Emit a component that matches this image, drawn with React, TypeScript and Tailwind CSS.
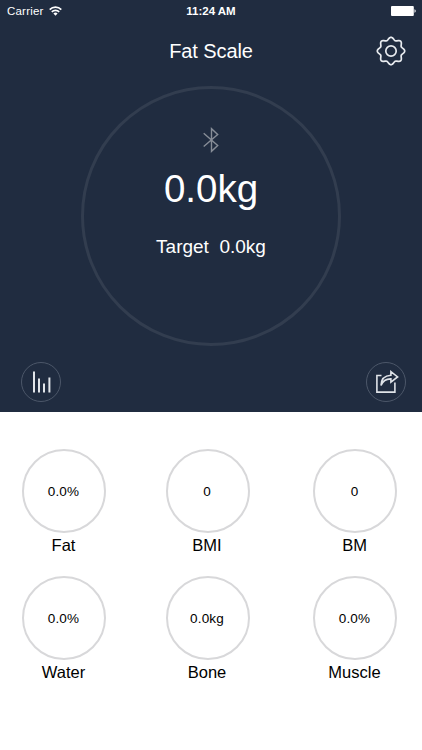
import React from 'react';

interface MetricProps {
  label: string;
  value: string;
}

const metrics: MetricProps[] = [
  { label: 'Fat', value: '0.0%' },
  { label: 'BMI', value: '0' },
  { label: 'BM', value: '0' },
  { label: 'Water', value: '0.0%' },
  { label: 'Bone', value: '0.0kg' },
  { label: 'Muscle', value: '0.0%' },
];

// Outline of the eight-lobed gear
const gearPoints = Array.from({ length: 128 }, (_, i) => {
  const angle = (i / 128) * Math.PI * 2;
  const radius = 12.4 + 1.3 * Math.cos(8 * angle);
  return `${(15 + radius * Math.sin(angle)).toFixed(2)},${(15 - radius * Math.cos(angle)).toFixed(2)}`;
}).join(' ');

const Metric: React.FC<MetricProps> = ({ label, value }) => (
  <div className="flex w-[84px] flex-col items-center">
    <div className="flex h-[84px] w-[84px] items-center justify-center rounded-full border-2 border-[#d8d8da] pt-0.5 pr-px text-[13.5px] tracking-[0.2px]">
      {value}
    </div>
    <span className="mt-[2px] pr-px text-[16.5px] leading-5 whitespace-nowrap">{label}</span>
  </div>
);

const WifiIcon = () => (
  <svg className="ml-[5px] h-[10px] w-[13px]" viewBox="0 0 13 10" fill="none" stroke="white" strokeWidth="1.7">
    <path d="M.7 3.6a8.2 8.2 0 0 1 11.6 0" />
    <path d="M2.8 5.9a5.2 5.2 0 0 1 7.4 0" />
    <path d="M6.5 9.7 4.4 7.6a3 3 0 0 1 4.2 0z" fill="white" stroke="none" />
  </svg>
);

const StatusBar = () => (
  <div className="grid h-[22px] grid-cols-3 items-center px-[6px] text-[11.5px]">
    <div className="flex items-center pl-px tracking-[0.2px]">
      <span className="pt-0.5">Carrier</span>
      <WifiIcon />
    </div>
    <div className="pt-0.5 text-center font-bold whitespace-nowrap">11:24 AM</div>
    <svg className="h-[10px] w-[25px] justify-self-end" viewBox="0 0 25 10" fill="white">
      <rect x="0" y="0" width="22.8" height="10" rx="1" />
      <path d="M23.5 3.2c1.6.4 1.6 3.2 0 3.6z" />
    </svg>
  </div>
);

const GearIcon = () => (
  <svg className="h-[30px] w-[30px]" viewBox="0 0 30 30" fill="none" stroke="#e8ebef" strokeWidth="1.7" strokeLinejoin="round">
    <polygon points={gearPoints} />
    <circle cx="15" cy="15" r="5.2" />
  </svg>
);

const BluetoothIcon = () => (
  <svg className="h-[26px] w-[16px]" viewBox="0 0 16 26" fill="none" stroke="#878d97" strokeWidth="1.4">
    <path d="M.7 6.3 14.7 18.5 8.5 24.3V1.7l6.2 5.8L.7 19.5" />
  </svg>
);

const ChartIcon = () => (
  <svg className="ml-0.5 h-[22px] w-[18px]" viewBox="0 0 18 22" fill="#e1e5ea">
    <rect x="0" y="0.5" width="2" height="21" />
    <rect x="5" y="7.5" width="2" height="14" />
    <rect x="10" y="12.5" width="2" height="9" />
    <rect x="15.4" y="6.5" width="2" height="15" />
  </svg>
);

const ShareIcon = () => (
  <svg className="ml-px h-[24px] w-[24px]" viewBox="0 0 24 24" fill="none" stroke="#dfe3e8" strokeWidth="1.6">
    <path d="M6.5 5.5H1.9v16.6h18v-9.6" />
    <path d="M6 15.4C6.2 8.6 10 5.5 15.9 5.2V1.7l6.7 5.2-6.7 5.3V8.9C11.3 8.8 8 10.4 6 15.4Z" />
  </svg>
);

export default function App() {
  return (
    <div className="h-[750px] w-[422px] overflow-hidden bg-white font-['Liberation_Sans',Arial,sans-serif] text-black">
      <section className="h-[412px] bg-[#202c40] text-white">
        <StatusBar />
        <header className="grid h-[58px] grid-cols-[1fr_auto_1fr] items-center pr-4">
          <h1 className="col-start-2 pl-4 text-[20px] tracking-[-0.1px]">Fat Scale</h1>
          <button className="justify-self-end">
            <GearIcon />
          </button>
        </header>

        <div className="mx-auto mt-[6px] flex h-[260px] w-[260px] flex-col items-center rounded-full border-[3px] border-[#323d4f] pt-[38px]">
          <BluetoothIcon />
          <div className="mt-[14px] text-[38.5px] leading-[44px]">0.0kg</div>
          <div className="mt-[24px] text-[19px] leading-6 whitespace-pre">Target  0.0kg</div>
        </div>

        <div className="mt-[16px] flex justify-between pl-[21px] pr-4">
          <button className="flex h-10 w-10 items-center justify-center rounded-full border border-[#4c5769]">
            <ChartIcon />
          </button>
          <button className="flex h-10 w-10 items-center justify-center rounded-full border border-[#4c5769]">
            <ShareIcon />
          </button>
        </div>
      </section>

      <section className="grid grid-cols-[143.5px_147.5px_84px] gap-y-[21px] pl-[22px] pt-[37px]">
        {metrics.map((metric) => (
          <Metric key={metric.label} {...metric} />
        ))}
      </section>
    </div>
  );
}
